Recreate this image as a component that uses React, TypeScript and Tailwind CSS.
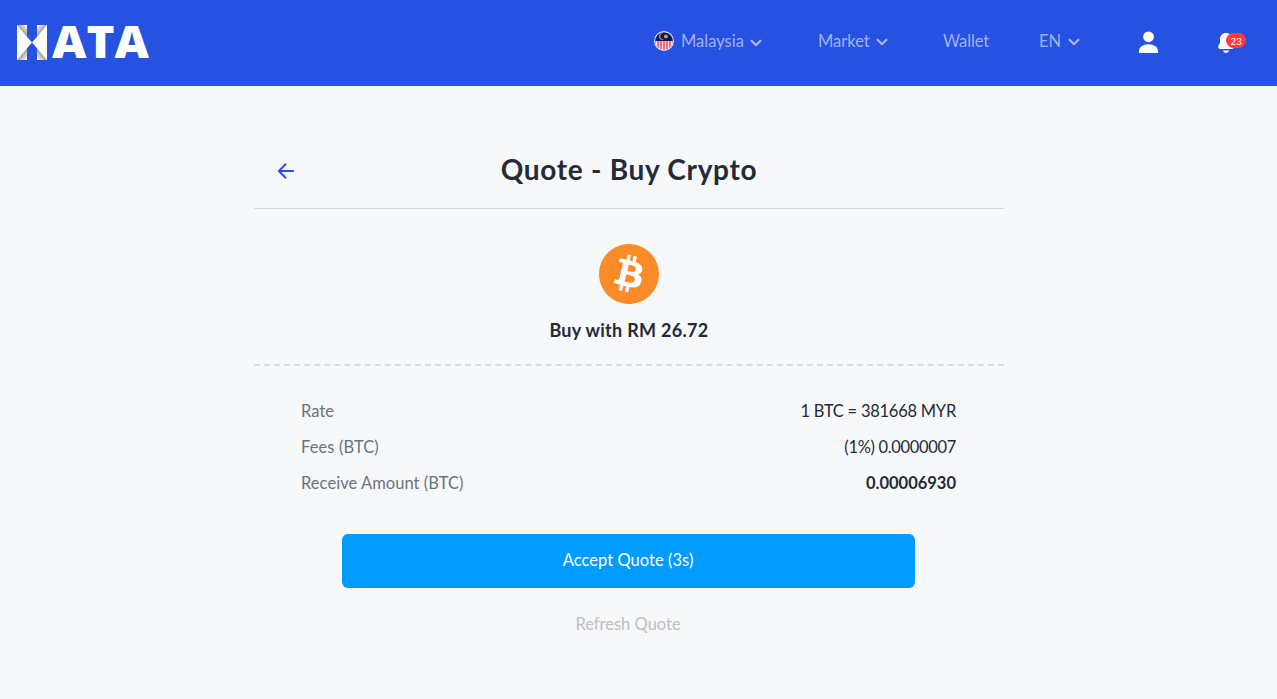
import React from 'react';
import { SiBitcoin } from 'react-icons/si';

const ROWS = [
  { label: "Rate", value: "1 BTC = 381668 MYR", labelCls: "tracking-[0.05px]", valueCls: "tracking-[-0.25px]" },
  { label: "Fees (BTC)", value: "(1%) 0.0000007", labelCls: "tracking-[0.1px]", valueCls: "tracking-[-0.33px]" },
  { label: "Receive Amount (BTC)", value: "0.00006930", labelCls: "tracking-[0.05px]", valueCls: "font-bold tracking-[0px]" },
];

function Logo() {
  return (
    <svg width="136" height="36" viewBox="0 0 136 36" className="block overflow-visible">
      <defs>
        <linearGradient id="foldLeft" gradientUnits="userSpaceOnUse" x1="5" y1="6" x2="10.5" y2="1.2">
          <stop offset="0" stopColor="#a39c9c" />
          <stop offset="1" stopColor="#ffffff" />
        </linearGradient>
      </defs>
      <g id="half">
        <path d="M0 0H10V11.7L15 17.5L10 23.3V35H0Z" fill="#fff" />
        <path d="M0 0H10V11.7Z" fill="url(#foldLeft)" />
        <path d="M0 0H10V11.7Z" fill="url(#foldLeft)" transform="matrix(1 0 0 -1 0 35)" />
      </g>
      <use href="#half" transform="matrix(-1 0 0 1 30 0)" />
      <text x="35" y="33" fontFamily="Open Sans" fontWeight="800" fontSize="44" textLength="97" lengthAdjust="spacingAndGlyphs" fill="#fff">ATA</text>
    </svg>
  );
}

function Flag() {
  return (
    <svg width="20" height="20" viewBox="0 0 20 20" className="block">
      <clipPath id="flagClip"><circle cx="10" cy="10" r="9.3" /></clipPath>
      <g clipPath="url(#flagClip)">
        <rect width="20" height="20" fill="#f6dfe5" />
        {[1, 4, 7, 10, 13, 16, 19].map(x => (
          <rect key={x} x={x - 0.8} y="10" width="1.6" height="10" fill="#ea5561" />
        ))}
        <rect width="20" height="10" fill="#0c1268" />
        <path d="M9.2 2.4A3.4 3.4 0 1 0 10.4 8.2A3 3 0 1 1 9.2 2.4Z" fill="#b88b35" />
        <circle cx="11.9" cy="5.4" r="1.9" fill="#dca42c" />
      </g>
      <circle cx="10" cy="10" r="9.4" fill="none" stroke="#dce2fa" strokeWidth="1.1" />
    </svg>
  );
}

function Chevron() {
  return (
    <svg width="12" height="8" viewBox="0 0 12 8" className="block">
      <path d="M1 1.2L6 6.2L11 1.2" fill="none" stroke="#b3c1f4" strokeWidth="2" />
    </svg>
  );
}

function Bell() {
  return (
    <svg width="16" height="20" viewBox="0 0 16 20" fill="#fff" className="block">
      <path d="M8 0C4.4 0 2 2.7 2 6V10L0.5 12.6C-0.3 14.6 0.6 16 2.3 16H13.7C15.4 16 16.3 14.6 15.5 12.6L14 10V6C14 2.7 11.6 0 8 0Z" />
      <path d="M4.8 17.6H11.2C10.6 19.2 9.4 20 8 20S5.4 19.2 4.8 17.6Z" />
    </svg>
  );
}

function Header() {
  return (
    <header className="flex h-[86px] items-start bg-[#2751e0] pl-[17px] text-[16.5px] leading-6 text-[#9fb1f1]">
      <div className="w-[637px] pt-[25px]"><Logo /></div>
      <div className="flex w-[164px] pt-[29px]">
        <div className="mt-[2px]"><Flag /></div>
        <span className="ml-[7px] w-[69px]">Malaysia</span>
        <div className="mt-[10px]"><Chevron /></div>
      </div>
      <div className="flex w-[125px] pt-[29px]">
        <span className="w-[58px]">Market</span>
        <div className="mt-[9px]"><Chevron /></div>
      </div>
      <span className="w-[96px] pt-[29px] tracking-[-0.1px]">Wallet</span>
      <div className="flex w-[100px] pt-[29px]">
        <span className="w-[29px]">EN</span>
        <div className="mt-[9px]"><Chevron /></div>
      </div>
      <svg width="20" height="22" viewBox="0 0 20 22" className="mt-[31px] block" fill="#fff">
        <circle cx="9.5" cy="5.8" r="5.4" />
        <path d="M0 22V20.2C0 16.2 4 13.3 9.5 13.3S19 16.2 19 20.2V22Z" />
      </svg>
      <div className="relative ml-[59px] mt-[33px]">
        <Bell />
        <span className="absolute left-[8px] top-0 flex h-[15px] w-5 items-center justify-center rounded-full bg-[#ff3d40] text-[10px] leading-none text-white">23</span>
      </div>
    </header>
  );
}

export default function App() {
  return (
    <div className="h-[699px] overflow-hidden bg-[#f7f8fa] font-['Lato',sans-serif] text-[16.5px] text-[#242a38]">
      <Header />

      <main className="ml-[254px] w-[750px]">
        <div className="flex h-[123px] items-center border-b border-[#d3d9e4] pt-[46px]">
          <svg width="18" height="18" viewBox="0 0 18 18" className="ml-[23px] mt-[2px] block">
            <path d="M17 9H2M9 1.8L1.9 9L9 16.2" fill="none" stroke="#2751e0" strokeWidth="2" />
          </svg>
          <h1 className="-mt-[2px] mr-[41px] flex-1 text-center text-[28px] font-bold leading-9 tracking-[0.7px]">Quote - Buy Crypto</h1>
        </div>

        <div className="flex h-[157px] flex-col items-center border-b-2 border-dashed border-[#d8dce3] pt-[35px]">
          <div className="rounded-full bg-white">
            <SiBitcoin size={60} color="#fb8b28" />
          </div>
          <p className="mt-[14px] text-lg font-bold leading-6 tracking-[0.3px]">Buy with RM 26.72</p>
        </div>

        <div className="flex flex-col gap-3 pl-[47px] pr-[48px] pt-[33px] leading-6">
          {ROWS.map(row => (
            <div key={row.label} className="flex justify-between">
              <span className={`text-[#68737c] ${row.labelCls}`}>{row.label}</span>
              <span className={row.valueCls}>{row.value}</span>
            </div>
          ))}
        </div>

        <div className="flex flex-col items-center pr-[2px] pt-[39px]">
          <button className="h-[54px] w-[573px] rounded-md bg-[#009bff] pb-px tracking-[0.05px] text-white">Accept Quote (3s)</button>
          <button className="mt-6 leading-6 text-[#bdbfc2]">Refresh Quote</button>
        </div>
      </main>
    </div>
  );
}
